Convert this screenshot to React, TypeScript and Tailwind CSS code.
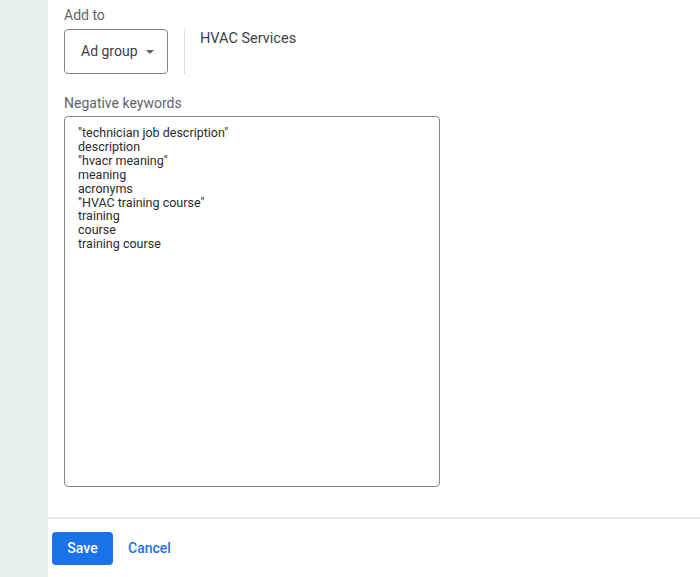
export default function App() {
  const keywords = [
    '"technician job description"',
    "description",
    '"hvacr meaning"',
    "meaning",
    "acronyms",
    '"HVAC training course"',
    "training",
    "course",
    "training course",
  ];

  return (
    <div
      className="flex h-[577px] w-[700px] overflow-hidden bg-white"
      style={{ fontFamily: "Roboto, 'Liberation Sans', sans-serif" }}
    >
      {/* Left rail */}
      <div className="w-[48px] shrink-0 bg-[#e9f1ef]" />

      <div className="flex flex-1 flex-col">
        <div className="flex-1 pl-[16px] pt-[6px]">
          <div className="text-[14px] leading-[18px] text-[#5f6368]">Add to</div>

          <div className="mt-[5px] flex items-stretch">
            <button className="flex h-[45px] w-[104px] items-center rounded-[4px] border border-[#80868b] pl-[16px] text-[14px] text-[#3c4043]">
              Ad group
              <svg className="ml-[8px]" width="8" height="4" viewBox="0 0 8 4">
                <path d="M0 0 L8 0 L4 4 Z" fill="#5f6368" />
              </svg>
            </button>
            <div className="ml-[16px] w-px bg-[#dadce0]" />
            <div className="ml-[15px] pt-[1px] text-[14.5px] leading-[18px] text-[#3c4043]">
              HVAC Services
            </div>
          </div>

          <div className="mt-[20px] text-[14px] leading-[18px] text-[#5f6368]">
            Negative keywords
          </div>

          <div className="mt-[4px] h-[371px] w-[376px] rounded-[4px] border border-[#80868b] pl-[13px] pt-[9px]">
            {keywords.map((k) => (
              <div key={k} className="text-[12.5px] leading-[13.9px] text-[#2a2b2e]">
                {k}
              </div>
            ))}
          </div>
        </div>

        {/* Footer */}
        <div className="h-[60px] border-t-2 border-[#e8eaed] pl-[4px] pt-[13px]">
          <div className="flex items-center">
            <button className="h-[33px] w-[61px] rounded-[4px] bg-[#1a73e8] text-[14px] font-medium text-white">
              Save
            </button>
            <button className="ml-[15px] text-[14px] font-medium text-[#1a73e8]">Cancel</button>
          </div>
        </div>
      </div>
    </div>
  );
}
